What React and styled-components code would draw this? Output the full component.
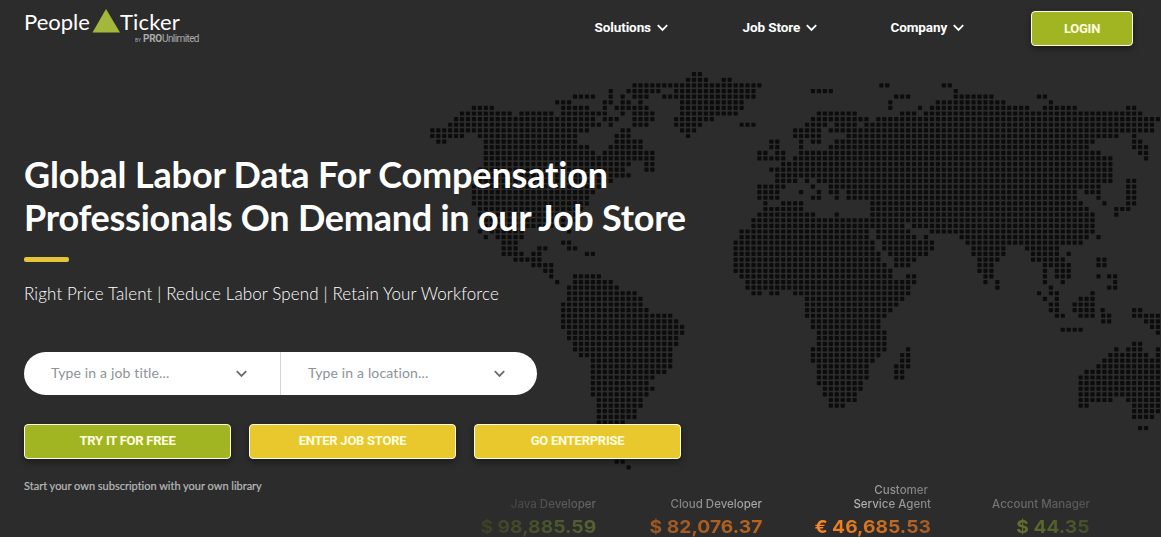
import React from "react";
import styled, { createGlobalStyle } from "styled-components";

const GlobalStyle = createGlobalStyle`
  *, *::before, *::after { box-sizing: border-box; }
  body {
    margin: 0;
    background: #2c2c2c;
    font-family: Lato, "Liberation Sans", sans-serif;
    font-variant-ligatures: none;
  }
`;

/* Each entry is a grid row followed by its filled column ranges. */
const MAP_ROWS = `
0:44-45
1:43-46,49-50
2:34-55,75.5-76.5,86-87
3:30,33-38,41-54,64-67,88
4:24-27,30,32,34-36,39-54,78-80,88-94,102-103
5:21-23,29-30,32-33,35,42-52,77,85-96,104
6:7-10,22-26,29,31-33,34-36,42-52,77,82,84-100,103-108,117-118
7:5-13,15-20,22-26,27-29,32,34-37,42-51,65-71,79-81,83-119
8:4-21,22-26,27,29-31,34-37,41-47,64-71,72-73,75-122
9:3-28,30,34-36,41-45,52-54,63-66,68-71,73-121
10:0-26,32-33,42-44,61-65,67-121
11:0-5,8-24,31-33,43,61-65,70-115,118
12:1-2,9-24,31-35,57-58,62,64-65,68-111,118-119
13:9-26,30-35,57-58,62,67-110,118-120
14:9-27,29-37,55-56,58-59,62-112,119-120
15:9-37,55-59,61-114,120
16:9-33,36-37,59-114
17:8-32,36-37,57-114
18:8-33,58-114
19:8-30,58-61,63,65-114,117-118
20:7-28,55-59,64,67-112,117-118
21:7-27,55-58,62,65,67-68,70-108,110-112,117-118
22:7-26,55-58,64-65,68,70-108,112,117-118
23:7-26,56,59-62,74-109,113,117-118
24:8-25,56-62,74-110,115-117
25:8-24,55-64,68,74-111,115
26:9-24,54-111
27:9-20,22-23,54-79,81-111
28:8,10-15,23,52-73,75-80,84-111
29:9,11-15,52-73,75-81,83,89-110,112
30:12-14,22-23,51-74,76-84,90-109
31:12-14,18-19,23-24,51-74,76-84,91-96,100-105
32:12-15,17-18,26-27,51-75,77-83,91-96,101-105,107
33:14-18,51-75,78-81,92-95,101-106,112-113
34:17-20,51-76,78-80,92-94,103-107,112-113
35:19-20,51-77,92-94,103,105-107
36:20,24-28,52-77,80-81,93-94,103,105-107,112,113.8-114.8
37:21,24-30,53-81,93,95,103,106,114.8
38:23-31,53-80,95,104,113.8-114.8
39:23-34,54-55,57-58,61-80,102,104-105,111
40:23-35,63-79,103,105,109-111
41:22-35,63-78,104-105,108-111
42:22-36,63-77,104-105,108-111,112.7,118-119
43:22-40,63-76,105-106,109-111,112.8-113.8,118-122
44:22-41,64-75,112.8-113.8,120-122
45:22-42,64-75,121-122
45.5:106-109
46:23-42,65-76,122
47:23-41,65-76
48:24-41,65-76,118-119
49:24-40,64-76,80,115,117-119,122
50:25-40,64-75,79-80,114-120,122
51:27-40,64-74,79-80,113-122
52:27-40,65-73,78-80,112-122
53:27-39,65-73,78-79,110-122
54:27-37,65-73,78-79,109-122
55:27-36,65-72,109-122
56:27-37,66-72,109-122
57:27-36,66-71,109-122
58:28-35,67-71,109-114,117-122
59:28-35,67-69,109-110,118-122
60:28-34,118-122
61:28-34,118-121
62:28-32
63:28-32,119-120
64:28-31
65:28-31
66:28-31
67:29-31
68:29-31
69:31-32
70:33`;

const DOTS = MAP_ROWS.trim()
  .split("\n")
  .flatMap((line) => {
    const [row, runs] = line.split(":");
    return runs.split(",").flatMap((run) => {
      const [from, to = from] = run.split("-").map(Number);
      const dots = [];
      for (let col = from; col <= to; col += 1) {
        dots.push([432.3 + col * 5.948, 74.2 + Number(row) * 5.617]);
      }
      return dots;
    });
  });

const Hero = styled.main`
  display: grid;
  grid-template: 537px / 1161px;
  overflow: hidden;
  background: #2c2c2c;
  color: #fff;
  > * { grid-area: 1 / 1; }
`;
const MapArt = styled.svg`
  width: 1161px;
  height: 537px;
  fill: #0c0c0c;
`;
const Page = styled.div`
  display: flex;
  flex-direction: column;
  position: relative;
`;
const Header = styled.header`
  display: flex;
  height: 57px;
  padding: 0 28px 0 24px;
`;
const Logo = styled.div`
  display: flex;
  flex-direction: column;
  width: 180px;
  padding-top: 9px;
`;
const Wordmark = styled.div`
  display: flex;
  height: 24px;
  font-size: 22px;
  line-height: 26px;
`;
const LogoWord = styled.span`
  width: ${(p) => p.$width}px;
  letter-spacing: ${(p) => p.$tracking || 0}px;
  white-space: nowrap;
`;
const Byline = styled.div`
  display: flex;
  align-items: baseline;
  padding-left: 111px;
  height: 12px;
  color: #aaa;
  font: 400 10px/12px Roboto, sans-serif;
  letter-spacing: -0.6px;
  white-space: nowrap;
`;
const BylinePart = styled.span`
  width: ${(p) => p.$width}px;
  font-size: ${(p) => p.$size || 10}px;
  font-weight: ${(p) => (p.$bold ? 700 : 400)};
  letter-spacing: ${(p) => p.$tracking}px;
`;
const Nav = styled.nav`
  display: flex;
  margin-left: 390.5px;
  padding-top: 20px;
`;
const NavItem = styled.a`
  display: flex;
  width: ${(p) => p.$width}px;
  height: 16px;
  align-items: center;
  gap: 6px;
  font: 700 13.5px/16px Roboto, sans-serif;
  letter-spacing: -0.1px;
`;
const NavLabel = styled.span`
  padding-bottom: 2px;
`;
const Button = styled.button`
  width: ${(p) => p.$width || 207}px;
  height: 35px;
  padding: 0 0 ${(p) => p.$lift || 0}px;
  border: 1px solid #fffde8;
  border-radius: 4px;
  background: ${(p) => (p.$green ? "#a1b523" : "#e8c82c")};
  box-shadow: 0 3px 6px rgba(0, 0, 0, 0.4);
  color: #fffde0;
  font: 700 13px/16px Roboto, sans-serif;
  letter-spacing: -0.25px;
`;
const LoginSlot = styled.div`
  margin-left: auto;
  padding-top: 11px;
`;
const Content = styled.section`
  padding: 96px 0 0 24px;
`;
const Title = styled.h1`
  margin: 0;
  font-size: 36px;
  line-height: 43px;
  font-weight: 700;
  letter-spacing: -0.25px;
`;
const TitleLine = styled.span`
  display: block;
  letter-spacing: ${(p) => p.$tracking}px;
`;
const Accent = styled.div`
  width: 45px;
  height: 5px;
  margin-top: 18px;
  border-radius: 2px;
  background: #e3c43b;
`;
const Subtitle = styled.p`
  margin: 20px 0 0;
  font-size: 17px;
  line-height: 24px;
  font-weight: 300;
  letter-spacing: 0.12px;
`;
const Search = styled.div`
  display: flex;
  width: 513px;
  height: 43px;
  margin-top: 46px;
  overflow: hidden;
  border-radius: 22px;
  background: #fff;
`;
const Field = styled.div`
  display: flex;
  flex: 0 0 ${(p) => p.$width}px;
  align-items: center;
  justify-content: space-between;
  padding: 0 ${(p) => p.$right}px 0 27px;
  border-right: ${(p) => (p.$divided ? "1px solid #d4d4d4" : "0")};
  color: #8c9396;
  font-size: 14px;
  letter-spacing: 0.15px;
`;
const Placeholder = styled.span`
  padding-bottom: 2px;
`;
const Actions = styled.div`
  display: flex;
  gap: 18px;
  margin-top: 29px;
`;
const Note = styled.p`
  margin: 19px 0 0;
  color: #b9b9b9;
  font-size: 11px;
  line-height: 16px;
  -webkit-text-stroke: 0.2px #b9b9b9;
`;
const Ticker = styled.div`
  display: grid;
  grid-template-columns: 166px 166px 169px 159px;
  align-self: end;
  height: 54px;
  padding-left: 430px;
  position: relative;
`;
const Quote = styled.div`
  display: flex;
  flex-direction: column;
  align-items: flex-end;
  justify-content: flex-end;
  font-family: Inter, sans-serif;
  white-space: nowrap;
`;
const Faded = styled.span`
  background: linear-gradient(90deg, ${(p) => p.$from}, ${(p) => p.$to});
  background-clip: text;
  color: transparent;
`;
const Role = styled(Faded)`
  font-size: 11.5px;
  line-height: 14px;
  font-weight: 500;
  margin-right: ${(p) => p.$inset || 0}px;
`;
const Amount = styled(Faded)`
  height: 26px;
  font-size: 18px;
  line-height: 32px;
  font-weight: 700;
  transform: scaleX(1.07);
  transform-origin: right;
`;

const Chevron = ({ color = "#fff" }) => (
  <svg width="11" height="8" viewBox="0 0 11 8" fill="none" stroke={color} strokeWidth="1.8">
    <path d="M.8 1.2 5.5 6 10.2 1.2" />
  </svg>
);

const NAV = [
  ["Solutions", 148],
  ["Job Store", 148],
  ["Company", 90],
];

const QUOTES = [
  { roles: [["Java Developer", "#444444", "#686868"]], amount: ["$ 98,885.59", "#394025", "#566330"] },
  { roles: [["Cloud Developer", "#808080", "#b0b0b0"]], amount: ["$ 82,076.37", "#9c5822", "#b8641e"] },
  {
    roles: [
      ["Customer", "#a0a0a0", "#7c7c7c", 3],
      ["Service Agent", "#bdbdbd", "#858585"],
    ],
    amount: ["€ 46,685.53", "#ff8a20", "#a35a24"],
  },
  { roles: [["Account Manager", "#787878", "#545454"]], amount: ["$ 44.35", "#64742d", "#434c2a"] },
];

export default function App() {
  return (
    <Hero>
      <GlobalStyle />
      <MapArt viewBox="0 0 1161 537" aria-hidden="true">
        {DOTS.map(([x, y], i) => (
          <rect key={i} x={x - 2.1} y={y - 2.1} width="4.2" height="4.2" rx="0.8" />
        ))}
      </MapArt>
      <Page>
        <Header>
          <Logo>
            <Wordmark>
              <LogoWord $width={68}>People</LogoWord>
              <svg width="28" height="24" viewBox="0 0 28 24">
                <path d="M14 0 28 23.5H.5z" fill="#a3b83b" />
              </svg>
              <LogoWord $width={64} $tracking={0.2}>Ticker</LogoWord>
            </Wordmark>
            <Byline>
              <BylinePart $width={8} $size={5} $tracking={0}>BY</BylinePart>
              <BylinePart $width={19} $tracking={-0.3} $bold>PRO</BylinePart>
              <BylinePart $width={40} $tracking={-0.6}>Unlimited</BylinePart>
            </Byline>
          </Logo>
          <Nav>
            {NAV.map(([label, width]) => (
              <NavItem key={label} $width={width}>
                <NavLabel>{label}</NavLabel>
                <Chevron />
              </NavItem>
            ))}
          </Nav>
          <LoginSlot>
            <Button $green $width={102}>LOGIN</Button>
          </LoginSlot>
        </Header>
        <Content>
          <Title>
            <TitleLine $tracking={-0.16}>Global Labor Data For Compensation</TitleLine>
            <TitleLine $tracking={-0.25}>Professionals On Demand in our Job Store</TitleLine>
          </Title>
          <Accent />
          <Subtitle>Right Price Talent | Reduce Labor Spend | Retain Your Workforce</Subtitle>
          <Search>
            <Field $width={257} $right={33} $divided>
              <Placeholder>Type in a job title...</Placeholder>
              <Chevron color="#6b6b6b" />
            </Field>
            <Field $width={256} $right={32}>
              <Placeholder>Type in a location...</Placeholder>
              <Chevron color="#6b6b6b" />
            </Field>
          </Search>
          <Actions>
            <Button $green $lift={2}>TRY IT FOR FREE</Button>
            <Button $lift={2}>ENTER JOB STORE</Button>
            <Button $lift={2}>GO ENTERPRISE</Button>
          </Actions>
          <Note>Start your own subscription with your own library</Note>
        </Content>
      </Page>
      <Ticker>
        {QUOTES.map(({ roles, amount }) => (
          <Quote key={amount[0]}>
            {roles.map(([text, from, to, inset]) => (
              <Role key={text} $from={from} $to={to} $inset={inset}>{text}</Role>
            ))}
            <Amount $from={amount[1]} $to={amount[2]}>{amount[0]}</Amount>
          </Quote>
        ))}
      </Ticker>
    </Hero>
  );
}
